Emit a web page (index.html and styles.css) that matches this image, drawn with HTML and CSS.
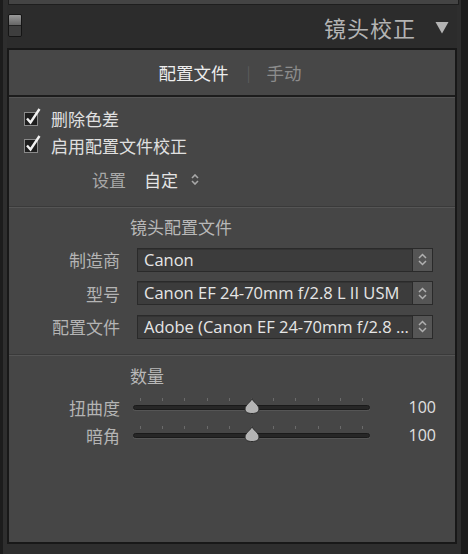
FILE: index.html
```html
<!DOCTYPE html>
<html lang="zh">
<head>
<meta charset="utf-8">
<link rel="stylesheet" href="styles.css">
</head>
<body>
<div class="app">
  <div class="prev"></div>
  <div class="header">
    <div class="toggle"><span class="toggle-top"></span><span class="toggle-bot"></span></div>
    <div class="title">镜头校正</div>
    <svg class="tri" width="14" height="13" viewBox="0 0 14 13"><path d="M0.5 1 L13.5 1 L7 12.5 Z" fill="#b4b4b4"/></svg>
  </div>
  <div class="panel">
    <div class="tabs">
      <span class="tab active">配置文件</span>
      <span class="tab-sep">|</span>
      <span class="tab">手动</span>
    </div>
    <div class="section s1">
      <div class="check-row">
        <svg class="cb" width="18" height="20" viewBox="0 0 18 20"><rect x="0.5" y="5.5" width="13" height="13" fill="#1e1e1e" stroke="#8a8a8a"/><path d="M3 11.5 L6.5 15.5 L15.5 2" fill="none" stroke="#f2f2f2" stroke-width="2.4"/></svg>
        <span class="check-label">删除色差</span>
      </div>
      <div class="check-row">
        <svg class="cb" width="18" height="20" viewBox="0 0 18 20"><rect x="0.5" y="5.5" width="13" height="13" fill="#1e1e1e" stroke="#8a8a8a"/><path d="M3 11.5 L6.5 15.5 L15.5 2" fill="none" stroke="#f2f2f2" stroke-width="2.4"/></svg>
        <span class="check-label">启用配置文件校正</span>
      </div>
      <div class="setting-row">
        <span class="setting-label">设置</span>
        <span class="setting-value">自定</span>
        <svg class="updown" width="8" height="11" viewBox="0 0 8 11"><path d="M1 4 L4 1 L7 4 M1 7 L4 10 L7 7" fill="none" stroke="#a8a8a8" stroke-width="1.6"/></svg>
      </div>
    </div>
    <div class="section s2">
      <div class="sec-title">镜头配置文件</div>
      <div class="field-row">
        <span class="field-label">制造商</span>
        <div class="select"><span class="select-text">Canon</span><span class="select-arrow"><svg width="9" height="13" viewBox="0 0 9 13"><path d="M1 5 L4.5 1.5 L8 5 M1 8 L4.5 11.5 L8 8" fill="none" stroke="#b0b0b0" stroke-width="1.5"/></svg></span></div>
      </div>
      <div class="field-row">
        <span class="field-label">型号</span>
        <div class="select"><span class="select-text">Canon EF 24-70mm f/2.8 L II USM</span><span class="select-arrow"><svg width="9" height="13" viewBox="0 0 9 13"><path d="M1 5 L4.5 1.5 L8 5 M1 8 L4.5 11.5 L8 8" fill="none" stroke="#b0b0b0" stroke-width="1.5"/></svg></span></div>
      </div>
      <div class="field-row">
        <span class="field-label">配置文件</span>
        <div class="select"><span class="select-text">Adobe (Canon EF 24-70mm f/2.8 ...</span><span class="select-arrow"><svg width="9" height="13" viewBox="0 0 9 13"><path d="M1 5 L4.5 1.5 L8 5 M1 8 L4.5 11.5 L8 8" fill="none" stroke="#b0b0b0" stroke-width="1.5"/></svg></span></div>
      </div>
    </div>
    <div class="section s3">
      <div class="sec-title">数量</div>
      <div class="slider-row">
        <span class="field-label">扭曲度</span>
        <div class="slider">
          <div class="ticks"><i></i><i></i><i></i><i></i><i></i><i></i><i></i><i></i><i></i><i></i><i></i></div>
          <div class="track"></div>
          <svg class="thumb" width="16" height="16" viewBox="0 0 16 16"><path d="M8 0.5 C9 4 15 7 15 11 C15 14 12.5 15.5 8 15.5 C3.5 15.5 1 14 1 11 C1 7 7 4 8 0.5 Z" fill="#b4b4b4" stroke="#2a2a2a" stroke-width="1"/></svg>
        </div>
        <span class="value">100</span>
      </div>
      <div class="slider-row">
        <span class="field-label">暗角</span>
        <div class="slider">
          <div class="ticks"><i></i><i></i><i></i><i></i><i></i><i></i><i></i><i></i><i></i><i></i><i></i></div>
          <div class="track"></div>
          <svg class="thumb" width="16" height="16" viewBox="0 0 16 16"><path d="M8 0.5 C9 4 15 7 15 11 C15 14 12.5 15.5 8 15.5 C3.5 15.5 1 14 1 11 C1 7 7 4 8 0.5 Z" fill="#b4b4b4" stroke="#2a2a2a" stroke-width="1"/></svg>
        </div>
        <span class="value">100</span>
      </div>
    </div>
  </div>
</div>
</body>
</html>
```

FILE: styles.css
```css
* { box-sizing: border-box; }
html, body { margin: 0; padding: 0; }
body {
  background: #1c1c1c;
  width: 468px;
  height: 554px;
  overflow: hidden;
  font-family: "Noto Sans CJK SC", "Open Sans", sans-serif;
}
.app {
  margin: 0 7px 0 3px;
  padding: 0 4px 10px 4px;
  background: #2e2e2e;
  height: 554px;
  display: flex;
  flex-direction: column;
}
.prev {
  height: 5px;
  margin: 0 -2px 0 1px;
  background: #444444;
  border: 1px solid #1e1e1e;
  border-top: none;
}
.header {
  height: 43px;
  display: flex;
  align-items: center;
  padding: 0 8px 0 1px;
  background: #2c2c2c;
}
.toggle {
  width: 14px;
  height: 23px;
  margin-top: -2px;
  border: 1px solid #151515;
  border-radius: 2px;
  display: flex;
  flex-direction: column;
  overflow: hidden;
}
.toggle-top { flex: 1; background: linear-gradient(#9a9a9a, #666666); }
.toggle-bot { flex: 1; background: #3e3e3e; border-top: 1px solid #222; }
.title {
  margin-left: auto;
  font-size: 22px;
  color: #b4b4b4;
  letter-spacing: 1px;
  line-height: 1;
}
.tri { margin-left: 19px; margin-top: 1px; }
.panel {
  flex: 1;
  border: 2px solid #181818;
  background: #464646;
  display: flex;
  flex-direction: column;
}
.tabs {
  height: 47px;
  display: flex;
  align-items: center;
  justify-content: center;
  border-bottom: 2px solid #1c1c1c;
  background: #474747;
  padding-right: 4px;
}
.tab {
  font-size: 17.5px;
  color: #8c8c8c;
  line-height: 1;
}
.tab.active { color: #ededed; }
.tab-sep {
  color: #5c5c5c;
  font-size: 15px;
  margin: 0 16px 0 18px;
  line-height: 1;
}
.section {
  border-top: 1px solid #555555;
  border-bottom: 1px solid #3a3a3a;
}
.s1 { height: 110px; padding: 7px 0 0 15px; }
.check-row {
  display: flex;
  align-items: center;
  height: 27px;
}
.cb { margin-top: -4px; }
.check-label {
  margin-left: 9px;
  font-size: 17px;
  color: #e0e0e0;
  line-height: 1;
}
.setting-row {
  display: flex;
  align-items: center;
  height: 40px;
  padding-left: 68px;
}
.setting-label { font-size: 17px; color: #a8a8a8; line-height: 1; }
.setting-value { font-size: 17px; color: #e4e4e4; margin-left: 18px; line-height: 1; }
.updown { margin-left: 13px; }
.s2 { height: 148px; padding-top: 9px; }
.sec-title {
  padding-left: 121px;
  font-size: 17px;
  color: #b8b8b8;
  line-height: 1;
  height: 26px;
  padding-top: 1px;
}
.field-row {
  display: flex;
  align-items: center;
  height: 33.5px;
}
.field-label {
  width: 111px;
  text-align: right;
  font-size: 17px;
  color: #b4b4b4;
  line-height: 1;
  flex: none;
}
.select {
  margin-left: 17px;
  width: 296px;
  height: 24px;
  display: flex;
  background: #3c3c3c;
  border: 1px solid #2a2a2a;
  box-shadow: inset 0 1px 0 #333;
}
.select-text {
  flex: 1;
  padding-left: 6px;
  font-family: "Open Sans", "Noto Sans", sans-serif;
  font-size: 16.5px;
  color: #e6e6e6;
  line-height: 22px;
  white-space: nowrap;
  overflow: hidden;
}
.select-arrow {
  width: 20px;
  border-left: 1px solid #2a2a2a;
  background: #555555;
  display: flex;
  align-items: center;
  justify-content: center;
}
.s3 { flex: 1; padding-top: 10px; border-bottom: none; }
.s3 .sec-title { height: 27px; }
.slider-row {
  display: flex;
  align-items: center;
  height: 28px;
}
.slider {
  position: relative;
  margin-left: 13px;
  width: 237px;
  height: 20px;
  display: flex;
  align-items: center;
}
.track {
  width: 100%;
  height: 5px;
  border-radius: 3px;
  background: #262626;
  border: 1px solid #1a1a1a;
  box-shadow: 0 1px 0 #555;
}
.ticks {
  position: absolute;
  left: 7px;
  right: 7px;
  top: 1px;
  display: flex;
  justify-content: space-between;
}
.ticks i {
  display: block;
  width: 1px;
  height: 3px;
  background: #6a6a6a;
}
.thumb {
  position: absolute;
  left: 111px;
  top: 1px;
}
.value {
  margin-left: auto;
  margin-right: 19px;
  font-family: "Open Sans", "Noto Sans", sans-serif;
  font-size: 16px;
  color: #e0e0e0;
  line-height: 1;
}
```
